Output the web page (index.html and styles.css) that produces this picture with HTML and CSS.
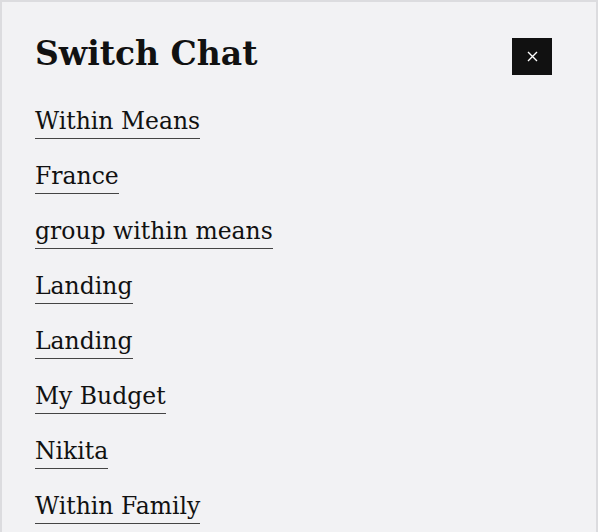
FILE: index.html
```html
<!DOCTYPE html>
<html lang="en">
<head>
    <meta charset="UTF-8">
    <meta name="viewport" content="width=device-width, initial-scale=1.0">
    <title>Switch Chat</title>
    <link rel="stylesheet" href="styles.css">
</head>
<body>
    <div class="dialog">
        <div class="dialog-header">
            <h1>Switch Chat</h1>
            <button class="close-button" aria-label="Close">
                <svg width="11" height="11" viewBox="0 0 11 11">
                    <path d="M1 1 L10 10 M10 1 L1 10" stroke="#ffffff" stroke-width="1.4" fill="none"/>
                </svg>
            </button>
        </div>

        <ul class="chat-list">
            <li><a href="#">Within Means</a></li>
            <li><a href="#">France</a></li>
            <li><a href="#">group within means</a></li>
            <li><a href="#">Landing</a></li>
            <li><a href="#">Landing</a></li>
            <li><a href="#">My Budget</a></li>
            <li><a href="#">Nikita</a></li>
            <li><a href="#">Within Family</a></li>
        </ul>
    </div>
</body>
</html>
```

FILE: styles.css
```css
html, body {
    margin: 0;
    height: 100%;
    overflow: hidden;
}
body {
    font-family: "DejaVu Serif", serif;
    background-color: #ffffff;
    color: #111111;
}
.dialog {
    box-sizing: border-box;
    width: 598px;
    height: 540px;
    background: #f2f2f4; /* light grey panel */
    border: 2px solid #dcdcdf;
    padding: 28px 44px 0 33px;
}
.dialog-header {
    display: flex;
    justify-content: space-between;
    align-items: flex-start;
    margin-bottom: 26px;
}
h1 {
    margin: 0;
    font-size: 33px;
    font-weight: bold;
    line-height: 48px;
}
.close-button {
    display: flex;
    align-items: center;
    justify-content: center;
    width: 40px;
    height: 37px;
    margin-top: 8px;
    background: #111111;
    border: none;
    padding: 0;
    cursor: pointer;
}
.chat-list {
    list-style: none;
    margin: 0;
    padding: 0;
}
.chat-list li {
    height: 55px;
}
.chat-list a {
    display: inline-block;
    color: #111111;
    text-decoration: none;
    font-size: 23.5px;
    line-height: 34px;
    border-bottom: 1.5px solid #444444; /* underline sits a bit below text */
}
```
